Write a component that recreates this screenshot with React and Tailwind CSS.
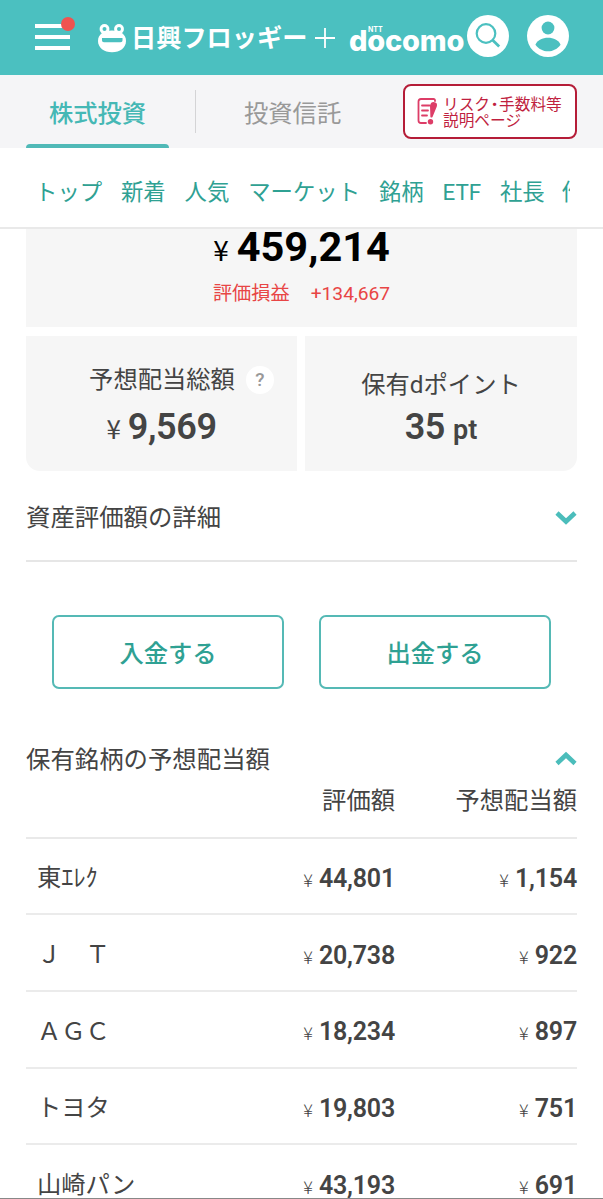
const holdings = [
  { name: '東ｴﾚｸ', value: '44,801', dividend: '1,154' },
  { name: 'Ｊ　Ｔ', value: '20,738', dividend: '922' },
  { name: 'ＡＧＣ', value: '18,234', dividend: '897' },
  { name: 'トヨタ', value: '19,803', dividend: '751' },
  { name: '山崎パン', value: '43,193', dividend: '691' },
];

const navItems = ['トップ', '新着', '人気', 'マーケット', '銘柄', 'ETF', '社長', '作'];

function FrogIcon() {
  return (
    <svg width="29" height="29" viewBox="0 0 29 29" fill="#fff">
      <circle cx="6.500" cy="5" r="4.900" />
      <circle cx="21" cy="5" r="4.900" />
      <path d="M14 6.500c8.300 0 14 3.800 14 10.500S22 28.300 14 28.300 0 23.700 0 17 5.700 6.500 14 6.500z" />
      <circle cx="6.500" cy="5" r="2" fill="#4bc0c0" />
      <circle cx="21" cy="5" r="2" fill="#4bc0c0" />
      <path d="M4 14h20.500v2.200c0 1.300-.7 2-2 2H6c-1.300 0-2-.7-2-2z" fill="#4bc0c0" />
    </svg>
  );
}

function SearchIcon() {
  return (
    <svg width="42" height="42" viewBox="0 0 42 42" fill="none">
      <circle cx="21" cy="21" r="21" fill="#fff" />
      <circle cx="19" cy="18.500" r="9.300" stroke="#4bc0c0" strokeWidth="2.200" />
      <path d="M25.500 25l6.700 6.500" stroke="#4bc0c0" strokeWidth="2.800" />
    </svg>
  );
}

function UserIcon() {
  return (
    <svg width="42" height="42" viewBox="0 0 42 42">
      <circle cx="21" cy="21" r="21" fill="#fff" />
      <circle cx="21" cy="13" r="6.400" fill="#4bc0c0" />
      <path d="M8.400 29.700C10.500 25 15.500 22.800 21 22.800s10.500 2.200 12.600 6.900C30.500 33.900 26 36.300 21 36.300S11.500 33.900 8.400 29.700z" fill="#4bc0c0" />
    </svg>
  );
}

function RiskIcon() {
  return (
    <svg width="21" height="27" viewBox="0 0 21 27" fill="none" stroke="#dd3d67" strokeWidth="1.800" strokeLinecap="round">
      <path d="M18 3V2.500Q18 1 16.500 1H4Q1.500 1 1.500 3.500V22.500Q1.500 25 4 25H9" />
      <path d="M5 7.500h7.500M5 12.500h6M5 17.500h5" />
      <path d="M13 7.500Q14 3.500 17.500 4.200Q20.800 4.800 19.800 8.500L15.500 19Q14.400 20 13.400 19z" fill="#dd3d67" stroke="none" />
      <circle cx="13.500" cy="23.700" r="2.700" fill="#dd3d67" stroke="none" />
    </svg>
  );
}

function Chevron({ up }) {
  return (
    <svg width="22" height="16" viewBox="0 0 22 16" fill="none" stroke="#4bbdbb" strokeWidth="4.600">
      <path d={up ? 'M2 12.500l9-8.500L20 12.500' : 'M2 4l9 8.500L20 4'} />
    </svg>
  );
}

function Yen({ className }) {
  return <span className={`font-['Noto_Sans_CJK_JP',sans-serif] ${className}`}>¥</span>;
}

function Amount({ value }) {
  return (
    <span className="flex items-baseline justify-end pt-[6px] leading-[36px]">
      <Yen className="mr-[6px] text-[18px] font-light" />
      <span className="text-[25px] font-semibold tracking-[-0.2px]">{value}</span>
    </span>
  );
}

export default function App() {
  return (
    <div className="h-[1199px] w-[603px] overflow-hidden border-b border-[#888] bg-white font-[Roboto,'Noto_Sans_CJK_JP',sans-serif] text-[#444]">
      {/* Header */}
      <header className="flex h-[75px] items-start bg-[#4bc0c0] text-white">
        <button className="relative mt-[24px] ml-[35px] flex w-[35px] flex-col gap-[7px]">
          <span className="h-[4px] bg-white" />
          <span className="h-[4px] bg-white" />
          <span className="h-[4px] bg-white" />
          <span className="absolute -top-[7px] left-[26px] size-[14px] rounded-full bg-[#ef5350]" />
        </button>
        <div className="mt-[24px] ml-[28px] w-[29px]">
          <FrogIcon />
        </div>
        <span className="mt-[19px] ml-[4px] w-[180px] text-[25.200px] leading-[40px] font-bold whitespace-nowrap">日興フロッギー</span>
        <svg className="mt-[28px] ml-[4px]" width="20" height="20" viewBox="0 0 20 20" stroke="#fff" strokeWidth="1.800">
          <path d="M10 0v20M0 10h20" />
        </svg>
        <div className="ml-[14px] flex w-[118px] flex-col pt-[26px] font-[Inter,sans-serif]">
          <span className="pl-[19px] text-[7px] leading-[7px] font-bold">NTT</span>
          <span className="-mt-[11px] text-[29px] leading-[38px] font-extrabold tracking-[-0.2px]">docomo</span>
        </div>
        <div className="mt-[15px]">
          <SearchIcon />
        </div>
        <div className="mt-[15px] ml-[18px]">
          <UserIcon />
        </div>
      </header>

      {/* Tabs */}
      <div className="flex h-[73px] bg-[#f5f5f7] text-[24.300px]">
        <div className="ml-[26px] flex w-[143px] flex-col items-center justify-between">
          <span className="mt-[21px] leading-[36px] font-medium text-[#45b8b5]">株式投資</span>
          <span className="h-[4px] w-full rounded-t-[4px] bg-[#50b9b7]" />
        </div>
        <span className="mt-[15px] ml-[26px] h-[43px] w-px bg-[#d4d4d6]" />
        <span className="mt-[21px] ml-[48px] leading-[36px] text-[#999]">投資信託</span>
        <a className="mt-[9px] ml-auto mr-[26px] flex h-[55px] w-[174px] items-center rounded-[8px] border-2 border-[#b51d38] bg-white pl-[12px] text-[#c01f3f]">
          <RiskIcon />
          <span className="ml-[5px] flex flex-col pt-[2px] text-[15.700px] leading-[16px] whitespace-nowrap">
            <span className="flex">
              <span>リスク</span>
              <span className="flex w-[9px] justify-center">・</span>
              <span>手数料等</span>
            </span>
            <span>説明ページ</span>
          </span>
        </a>
      </div>

      {/* Category nav */}
      <nav className="h-[81px] border-b-2 border-[#e9e9e9] bg-white">
        <div className="ml-[35px] flex w-[535px] gap-[18.800px] overflow-hidden pt-[27px] text-[22.400px] leading-[34px] whitespace-nowrap text-[#2fa193]">
          {navItems.map((item) => (
            <a key={item} className="shrink-0 last:-ml-[2px] last:w-[8px] last:overflow-hidden">{item}</a>
          ))}
        </div>
      </nav>

      <main className="px-[26px]">
        {/* Total assets */}
        <section className="flex h-[98px] flex-col items-center bg-[#f6f6f6]">
          <div className="flex items-baseline leading-[36px] text-black">
            <Yen className="mr-[8px] text-[28px]" />
            <span className="text-[41.500px] font-bold">459,214</span>
          </div>
          <div className="mt-[12px] flex gap-[21px] text-[19.200px] leading-[30px] text-[#e84545]">
            <span>評価損益</span>
            <span>+134,667</span>
          </div>
        </section>

        <section className="mt-[9px] flex h-[135px] gap-[8px]">
          <div className="flex w-[271px] flex-col items-center rounded-bl-[14px] bg-[#f6f6f6] pt-[26px]">
            <div className="flex items-center pl-[40px] text-[24.300px] leading-[36px]">
              予想配当総額
              <span className="ml-[11px] flex size-[28px] items-center justify-center rounded-full bg-white text-[19px] font-medium text-[#999]">?</span>
            </div>
            <div className="mt-[11px] flex items-baseline leading-[36px]">
              <Yen className="mr-[7px] text-[26px]" />
              <span className="text-[36px] font-semibold tracking-[-0.400px]">9,569</span>
            </div>
          </div>
          <div className="flex w-[272px] flex-col items-center rounded-br-[14px] bg-[#f6f6f6] pt-[31px]">
            <span className="text-[24.300px] leading-[36px]">保有dポイント</span>
            <div className="mt-[6px] flex items-baseline gap-[8px] leading-[36px] font-semibold">
              <span className="text-[36px] tracking-[-0.400px]">35</span>
              <span className="text-[27px]">pt</span>
            </div>
          </div>
        </section>

        <section className="flex h-[91px] items-center justify-between border-b-2 border-[#e6e6e6] pt-[3px] text-[24.400px]">
          <h2 className="pt-[2px]">資産評価額の詳細</h2>
          <Chevron />
        </section>

        <div className="mt-[53px] flex justify-center gap-[35px] text-[24.300px] font-medium text-[#2fa193]">
          <button className="h-[74px] w-[232px] rounded-[7px] border-2 border-[#55b9b5] pt-[4px]">入金する</button>
          <button className="h-[74px] w-[232px] rounded-[7px] border-2 border-[#55b9b5] pt-[4px]">出金する</button>
        </div>

        {/* Expected dividends */}
        <section className="pt-[52px] text-[24.300px]">
          <div className="flex h-[36px] items-center justify-between">
            <h2 className="pt-[3px] text-[24.400px]">保有銘柄の予想配当額</h2>
            <Chevron up />
          </div>
          <div className="flex h-[61.500px] border-b-2 border-[#e9e9e9] pt-[6px] text-right leading-[36px]">
            <span className="w-[369px]">評価額</span>
            <span className="w-[182px]">予想配当額</span>
          </div>
          {holdings.map((h) => (
            <div key={h.name} className="flex h-[76.700px] items-center border-b-2 border-[#ebebeb]">
              <span className="w-[189px] pt-[5px] pl-[11px] whitespace-pre">{h.name}</span>
              <div className="w-[180px]">
                <Amount value={h.value} />
              </div>
              <div className="w-[182px]">
                <Amount value={h.dividend} />
              </div>
            </div>
          ))}
        </section>
      </main>
    </div>
  );
}
